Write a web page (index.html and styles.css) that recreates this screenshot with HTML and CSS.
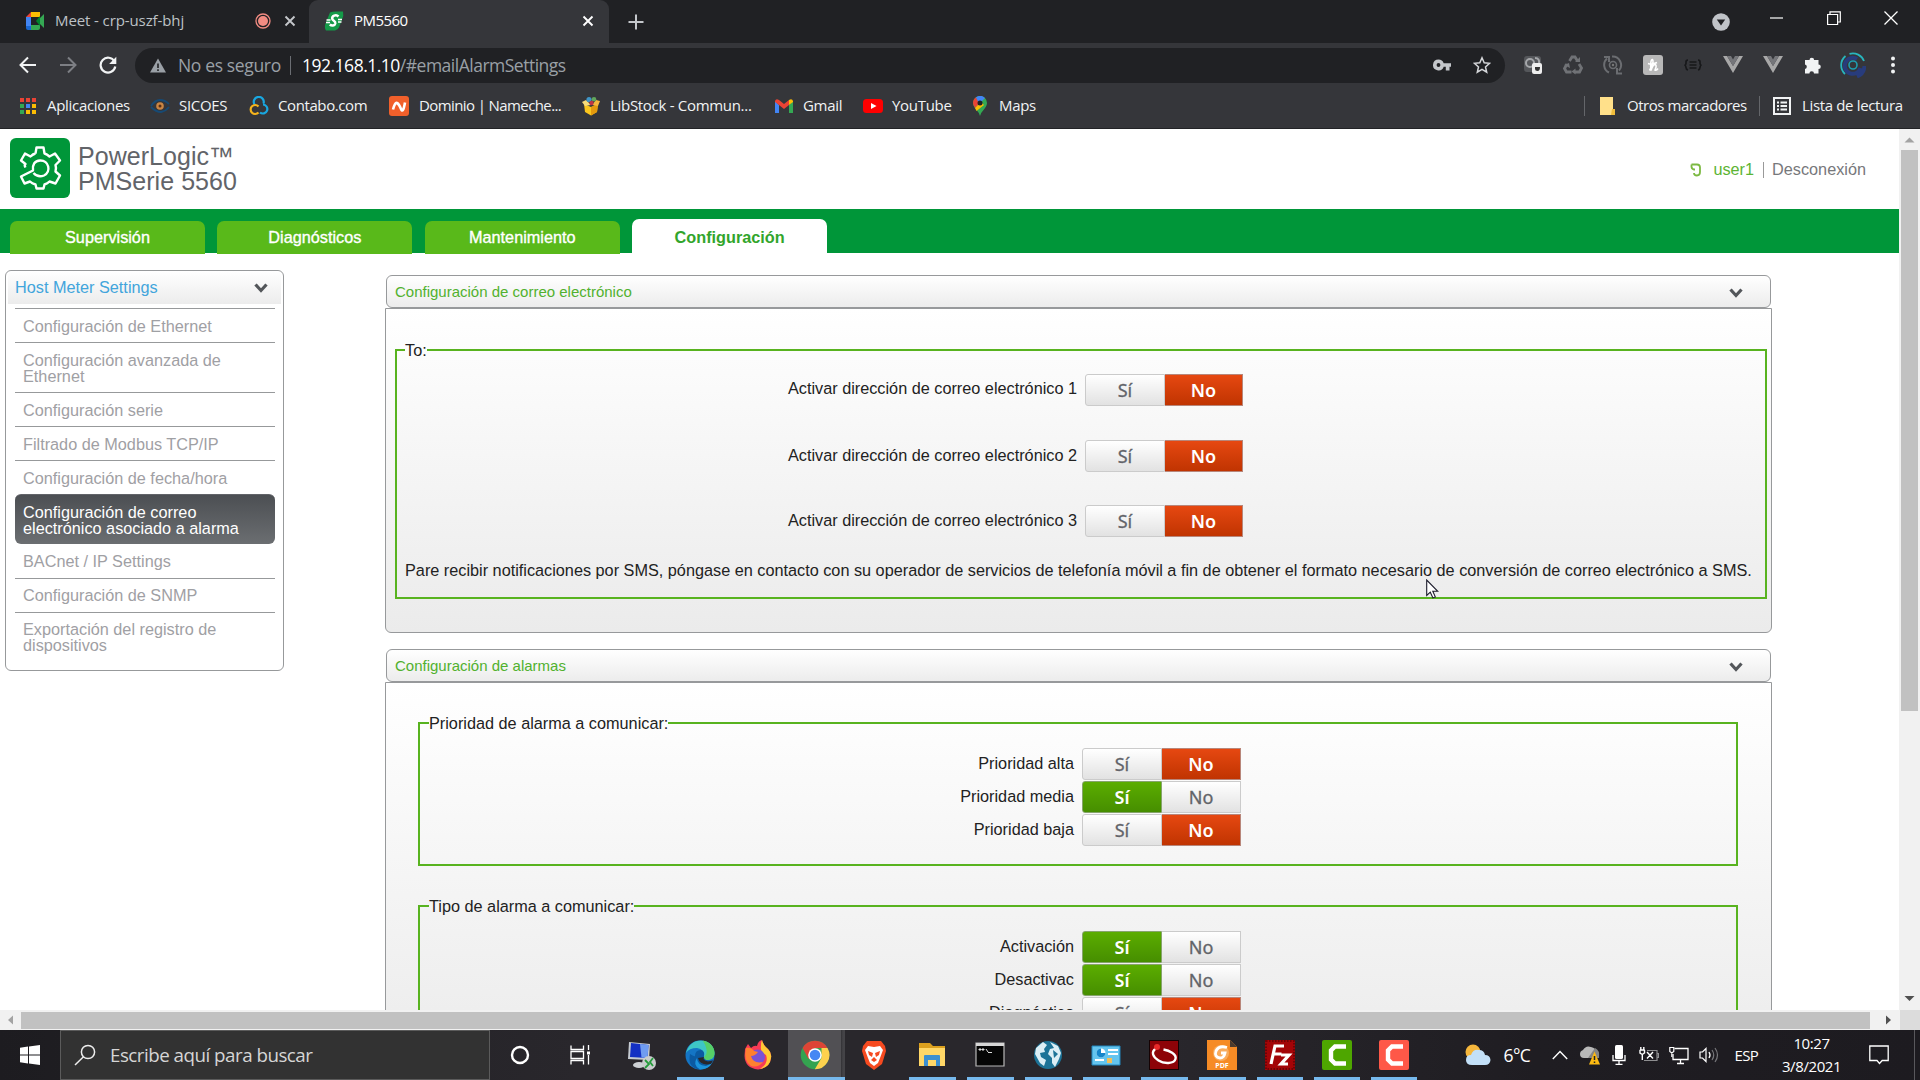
FILE: index.html
```html
<!DOCTYPE html>
<html lang="es">
<head>
<meta charset="utf-8">
<title>PM5560</title>
<link rel="stylesheet" href="styles.css">
</head>
<body>
<div class="screen">

<div class="tabstrip">
  <div class="tab">
    <svg class="i20" viewBox="0 0 20 20"><path d="M1 6l5-5v5z" fill="#ea4335"/><path d="M6 1h9v5H6z" fill="#fbbc04"/><path d="M1 6h5v9H1z" fill="#4285f4"/><path d="M1 15h5v4H3q-2 0-2-2z" fill="#1967d2"/><path d="M6 14h9v3q0 2-2 2H6z" fill="#34a853"/><path d="M11 10l4-5v10z" fill="#00832d"/><path d="M15 7l4-4v14l-4-4z" fill="#34a853"/></svg>
    <span class="tab-title">Meet - crp-uszf-bhj</span>
    <svg class="rec" viewBox="0 0 16 16"><circle cx="8" cy="8" r="7" fill="none" stroke="#f28b82" stroke-width="1.3"/><circle cx="8" cy="8" r="5" fill="#f28b82"/></svg>
    <svg class="tab-x" viewBox="0 0 12 12"><path d="M1.500 1.500l9 9M10.500 1.500l-9 9" stroke="#c4c7cb" stroke-width="1.900"/></svg>
  </div>
  <div class="tab tab-active">
    <svg class="i20" viewBox="0 0 20 20"><path d="M6 1.500Q8 .5 12 .5h7q1 4-1 8l-3 8q-1 2-4 3H2q-2-3-.5-7z" fill="#159a49"/><path d="M14.500 5.500C12 3 7.500 5 8.300 8c.5 2 3.500 2 3 4.500C10.700 15 7.500 15 5.800 13.500" fill="none" stroke="#fff" stroke-width="2.500"/><path d="M2.500 9h4M2 11.500h4M14 8.500h4M14 11h3.500" stroke="#fff" stroke-width="1.300"/></svg>
    <span class="tab-title tight">PM5560</span>
    <svg class="tab-x" viewBox="0 0 12 12"><path d="M1.500 1.500l9 9M10.500 1.500l-9 9" stroke="#fff" stroke-width="1.900"/></svg>
  </div>
  <svg class="newtab" viewBox="0 0 16 16"><path d="M8 .5v15M.5 8h15" stroke="#c4c7cb" stroke-width="2"/></svg>
  <div class="winctl">
    <svg class="wc-drop" viewBox="0 0 18 18"><circle cx="9" cy="9" r="8.800" fill="#c0c3c8"/><path d="M4.800 6.500h8.400L9 12.500z" fill="#202124"/></svg>
    <svg class="wc" viewBox="0 0 14 14"><path d="M0 7h13" stroke="#fff" stroke-width="1.200"/></svg>
    <svg class="wc" viewBox="0 0 14 14"><path d="M.6 3.500h10v10h-10zM3 3.500V.8h10.300V11h-2.700" fill="none" stroke="#fff" stroke-width="1.200"/></svg>
    <svg class="wc" viewBox="0 0 14 14"><path d="M.5 .5l13 13M13.500 .5l-13 13" stroke="#fff" stroke-width="1.300"/></svg>
  </div>
</div>

<div class="toolbar">
  <svg class="nav" viewBox="0 0 18 18"><path d="M17 9H2M9 1.500L1.500 9 9 16.500" fill="none" stroke="#f1f3f4" stroke-width="2"/></svg>
  <svg class="nav" viewBox="0 0 18 18"><path d="M1 9h15M9 1.500L16.500 9 9 16.500" fill="none" stroke="#7d7f84" stroke-width="2"/></svg>
  <svg class="nav" viewBox="0 0 18 18"><path d="M15.500 5.500A7.400 7.400 0 1 0 16.300 10.500" fill="none" stroke="#f1f3f4" stroke-width="2.200"/><path d="M17.300 .8v7.200h-7.200z" fill="#f1f3f4"/></svg>
  <div class="omnibox">
    <svg class="warn" viewBox="0 0 16 15"><path d="M8 .5l8 14H0z" fill="#9aa0a6"/><path d="M8 5.500v4.500M8 11.200v1.800" stroke="#202124" stroke-width="1.600"/></svg>
    <span class="insecure">No es seguro</span>
    <i class="omni-sep"></i>
    <span class="url"><b>192.168.1.10</b>/#emailAlarmSettings</span>
    <svg class="key" viewBox="0 0 18 12"><path fill-rule="evenodd" d="M5.500 .5a5.500 5.500 0 0 1 5.200 3.700H18v3.600h-1.500v3.700h-3.700V7.800h-2.100A5.500 5.500 0 1 1 5.500 .5zm0 3.600a1.900 1.900 0 1 0 0 3.800 1.900 1.900 0 0 0 0-3.800z" fill="#c4c7cb"/></svg>
    <svg class="star" viewBox="0 0 18 18"><path d="M9 1.800l2.200 5 5.400.5-4.100 3.600 1.200 5.300L9 13.400l-4.700 2.800 1.200-5.300-4.100-3.600 5.400-.5z" fill="none" stroke="#d5d7da" stroke-width="1.500"/></svg>
  </div>
  <div class="exts">
    <svg viewBox="0 0 20 20"><rect x="1" y="1" width="17" height="16" rx="3" fill="#55575b"/><circle cx="7" cy="8" r="4" fill="none" stroke="#a5a7aa" stroke-width="2"/><path d="M12 3q5 0 4 6" fill="none" stroke="#a5a7aa" stroke-width="2"/><rect x="9" y="8" width="10" height="11" rx="2" fill="#eee"/><path d="M12 12h5q0 4-2.500 4T12 14z" fill="#333"/></svg>
    <svg viewBox="0 0 20 20"><path d="M6.500 6L9 2h3l2.500 4M16 9l2.500 4-2 4H12M8.500 17h-5l-2-3.500L4 9" fill="none" stroke="#707276" stroke-width="2.800"/><path d="M12 7h5V2zM12.500 13.500v6l-4-3zM1 10l5-2 1 5z" fill="#707276"/></svg>
    <svg viewBox="0 0 20 20"><path d="M4 3.500a8.500 8.500 0 0 0 2 14M9 1.500a8.500 8.500 0 0 1 7 14M1 2h5v5M19 18.500h-5V13" fill="none" stroke="#6b6d71" stroke-width="2"/><circle cx="10" cy="10" r="3.500" fill="none" stroke="#6b6d71" stroke-width="1.600"/><circle cx="10" cy="10" r="1.200" fill="#777"/></svg>
    <svg viewBox="0 0 20 20"><rect width="20" height="20" rx="3" fill="#b8b8b8"/><path d="M6.500 15.500Q11.500 7 9.500 4.500 7 4.500 8 15.500 10 9.500 12.300 9.500q1.800 1-.3 5.500 1.500.8 3-1.500M5 8.500q4 1.500 9-1" fill="none" stroke="#fff" stroke-width="1.600"/></svg>
    <svg viewBox="0 0 20 20"><path d="M5 5Q2.800 5 3 7.500T1.500 10Q3 10.500 3 12.500T5 15M15 5q2.200 0 2 2.500t1.500 2.500q-1.500.5-1.500 2.500T15 15M6.500 7h7M6.500 10h7M6.500 13h7" fill="none" stroke="#17181a" stroke-width="1.700"/></svg>
    <svg viewBox="0 0 20 20"><path d="M0 1h4l6 10 6-10h4L10 18z" fill="#a8a8a8"/><path d="M4 1h4l2 3.500L12 1h4l-6 10z" fill="#75767a"/></svg>
    <svg viewBox="0 0 20 20"><path d="M0 1h4l6 10 6-10h4L10 18z" fill="#a8a8a8"/><path d="M4 1h4l2 3.500L12 1h4l-6 10z" fill="#75767a"/></svg>
    <svg viewBox="0 0 20 20"><path d="M2 5h4.500a2.300 2.300 0 1 1 4.600 0H15.500v4.500a2.300 2.300 0 1 1 0 4.600V18.500H11a2.300 2.300 0 0 0-4.600 0H2v-4.600a2.300 2.300 0 0 0 0-4.500z" fill="#f1f3f4"/></svg>
    <svg class="avatar" viewBox="0 0 26 26"><path d="M5 22A12 12 0 0 1 5.500 4M9.500 1.800A12 12 0 0 1 24 9" fill="none" stroke="#28b5bd" stroke-width="1.800"/><path d="M17 24.500A12 12 0 0 0 24.500 14M17 7a8 8 0 1 0 3.500 9" fill="none" stroke="#283c7c" stroke-width="4"/><circle cx="13" cy="13" r="4" fill="none" stroke="#1f9eb0" stroke-width="1.600"/></svg>
    <svg viewBox="0 0 20 20"><circle cx="10" cy="3.500" r="2" fill="#f1f3f4"/><circle cx="10" cy="10" r="2" fill="#f1f3f4"/><circle cx="10" cy="16.500" r="2" fill="#f1f3f4"/></svg>
  </div>
</div>

<div class="bookmarks">
  <div class="bm w-apps"><svg viewBox="0 0 20 20"><path d="M2 2h4v4H2zM8 2h4v4H8zM14 2h4v4h-4z" fill="#ea4335"/><path d="M2 8h4v4H2zM2 14h4v4H2z" fill="#34a853"/><path d="M8 8h4v4H8z" fill="#4285f4"/><path d="M14 8h4v4h-4zM8 14h4v4H8zM14 14h4v4h-4z" fill="#fbbc04"/></svg><span>Aplicaciones</span></div>
  <div class="bm w-sic"><svg viewBox="0 0 20 20"><path d="M1 10q4-6 9-6 5 0 9 4M1 11q5 5 10 5 5-1 8-5" fill="none" stroke="#164a75" stroke-width="1.800"/><circle cx="10" cy="10" r="3.800" fill="#c98543"/><circle cx="10" cy="10" r="1.500" fill="#573018"/></svg><span>SICOES</span></div>
  <div class="bm w-con"><svg viewBox="0 0 20 20"><path d="M5.500 8.500a5 5 0 1 1 9-1M14 8.500a4.500 4.500 0 1 1-3 8" fill="none" stroke="#19a7e0" stroke-width="2.200"/><path d="M9.500 10.500a4.500 4.500 0 1 0 0 6" fill="none" stroke="#f5b31c" stroke-width="2.200"/></svg><span>Contabo.com</span></div>
  <div class="bm w-dom"><svg viewBox="0 0 20 20"><rect width="20" height="20" rx="3" fill="#f1602b"/><path d="M4 13.500Q6 6 8 7t4 6 4-6.500" fill="none" stroke="#fff" stroke-width="2.600"/></svg><span>Dominio | Nameche...</span></div>
  <div class="bm w-lib"><svg viewBox="0 0 20 20"><path d="M3 8l7 3 7-3-1 8-6 3.500L4 16z" fill="#fbc61e"/><path d="M10 11v8.500l6-3.500 1-8z" fill="#e49a0d"/><path d="M1 6l4-2 5 5-6 1z" fill="#f7dc7a"/><path d="M19 5l-4-1-4 5 6 1z" fill="#f4b63e"/><circle cx="8" cy="3.500" r="2.600" fill="#3f95c6"/><circle cx="13" cy="3.200" r="2.300" fill="#61a75c"/><circle cx="10.500" cy="7" r="2.200" fill="#bf3545"/></svg><span>LibStock - Commun...</span></div>
  <div class="bm w-gm"><svg viewBox="0 0 20 20"><path d="M1 5v12h4V9z" fill="#4285f4"/><path d="M19 5v12h-4V9z" fill="#34a853"/><path d="M1 5q1-3 4-1l5 4 5-4v5l-5 4-5-4-4-3z" fill="#ea4335"/><path d="M15 4q3-2 4 1v1l-4 3z" fill="#fbbc04"/></svg><span>Gmail</span></div>
  <div class="bm w-yt"><svg viewBox="0 0 20 20"><rect y="3" width="20" height="14" rx="3.500" fill="#f00"/><path d="M8 7l5.500 3L8 13z" fill="#fff"/></svg><span>YouTube</span></div>
  <div class="bm"><svg viewBox="0 0 20 20"><path d="M3 7a7 7 0 0 1 14 0q0 3-3.500 7-2.500 2.500-3.500 6-1-3.500-3.500-6Q3 10 3 7z" fill="#34a853"/><path d="M3 7a7 7 0 0 1 3-5.700L10 7l-5 5Q3 9 3 7z" fill="#ea4335"/><path d="M5 12l6-6 3 3-7.500 6z" fill="#fbbc04"/><path d="M6 1.300Q11-2 15 2l-6 6z" fill="#4285f4"/><circle cx="10" cy="7" r="2.500" fill="#202124"/></svg><span>Maps</span></div>
  <div class="bm-right">
    <i class="bm-sep"></i>
    <div class="bm w-ot"><svg viewBox="0 0 20 20"><path d="M3 1h13v18H3z" fill="#ffe08a"/><path d="M15 13h3v6h-4z" fill="#f0bd3c"/></svg><span>Otros marcadores</span></div>
    <i class="bm-sep"></i>
    <div class="bm w-li"><svg viewBox="0 0 20 20"><rect x="2" y="2" width="16" height="16" fill="none" stroke="#f1f3f4" stroke-width="2"/><path d="M5 6.500h2M8.500 6.500H15M5 10h2M8.500 10H15M5 13.500h2M8.500 13.500H15" stroke="#f1f3f4" stroke-width="1.800"/></svg><span>Lista de lectura</span></div>
  </div>
</div>

<div class="viewport">
  <div class="page">
    <header class="head">
      <svg class="logo" viewBox="0 0 60 60"><rect width="60" height="60" rx="6" fill="#009639"/><path d="M25.500 15.500L26.500 9.500h7L34.500 15.500Q37 16.200 39.500 18.500L45 15.500 50 22.500 45.500 27q1 3 0 6.500L50 37.500 45.500 45.500 39.500 43.500Q37.500 45.500 34.500 46.500L33.500 50.500h-7L25.500 46.500Q22 45.500 20 43.500L14.500 45.500 11 38.500 23 32.500Q22 23 30 22.500C39 22 41.500 34 34 37.500Q28 40 23.500 35M15.500 29.500Q14 27 15.500 26L11 22.500 15 15.500 20.500 18.500Q23 16 25.500 15.500" fill="none" stroke="#fff" stroke-width="2.400" stroke-linejoin="round"/></svg>
      <div class="product">PowerLogic™<br>PMSerie 5560</div>
      <div class="session">
        <svg class="person" viewBox="0 0 12 14"><path d="M1.500 1.500H7q3 0 3 3V9q0 3.500-3 3.500T4 10M1.500 1.500Q1 6 4 6.500h1" fill="none" stroke="#7cb942" stroke-width="1.800"/></svg>
        <span class="user">user1</span><i class="user-sep"></i><span class="logout">Desconexión</span>
      </div>
    </header>
    <nav class="tabs">
      <a>Supervisión</a><a>Diagnósticos</a><a>Mantenimiento</a><a class="on">Configuración</a>
    </nav>
    <div class="columns">
      <aside class="side">
        <div class="side-head"><span>Host Meter Settings</span><svg class="chev" viewBox="0 0 14 10"><path d="M1.500 1.500L7 7.500l5.500-6" fill="none" stroke="#53565a" stroke-width="3.200"/></svg></div>
        <ul>
          <li>Configuración de Ethernet</li>
          <li class="two">Configuración avanzada de Ethernet</li>
          <li>Configuración serie</li>
          <li>Filtrado de Modbus TCP/IP</li>
          <li>Configuración de fecha/hora</li>
          <li class="two sel">Configuración de correo electrónico asociado a alarma</li>
          <li class="first">BACnet / IP Settings</li>
          <li class="low">Configuración de SNMP</li>
          <li class="two low">Exportación del registro de dispositivos</li>
        </ul>
      </aside>
      <main class="main">
        <div class="ph"><span>Configuración de correo electrónico</span><svg class="chev" viewBox="0 0 14 10"><path d="M1.500 1.500L7 7.500l5.500-6" fill="none" stroke="#53565a" stroke-width="3.200"/></svg></div>
        <section class="pb pb-mail">
          <fieldset class="fs fs-mail">
            <legend>To:</legend>
            <div class="row"><label>Activar dirección de correo electrónico 1</label><div class="tg"><span>Sí</span><span class="red">No</span></div></div>
            <div class="row"><label>Activar dirección de correo electrónico 2</label><div class="tg"><span>Sí</span><span class="red">No</span></div></div>
            <div class="row"><label>Activar dirección de correo electrónico 3</label><div class="tg"><span>Sí</span><span class="red">No</span></div></div>
            <p>Pare recibir notificaciones por SMS, póngase en contacto con su operador de servicios de telefonía móvil a fin de obtener el formato necesario de conversión de correo electrónico a SMS.</p>
          </fieldset>
        </section>
        <div class="ph ph2"><span>Configuración de alarmas</span><svg class="chev" viewBox="0 0 14 10"><path d="M1.500 1.500L7 7.500l5.500-6" fill="none" stroke="#53565a" stroke-width="3.200"/></svg></div>
        <section class="pb pb-alarm">
          <fieldset class="fs fs-alarm">
            <legend>Prioridad de alarma a comunicar:</legend>
            <div class="row"><label>Prioridad alta</label><div class="tg"><span>Sí</span><span class="red">No</span></div></div>
            <div class="row"><label>Prioridad media</label><div class="tg"><span class="green">Sí</span><span>No</span></div></div>
            <div class="row"><label>Prioridad baja</label><div class="tg"><span>Sí</span><span class="red">No</span></div></div>
          </fieldset>
          <fieldset class="fs fs-alarm">
            <legend>Tipo de alarma a comunicar:</legend>
            <div class="row"><label>Activación</label><div class="tg"><span class="green">Sí</span><span>No</span></div></div>
            <div class="row"><label>Desactivac</label><div class="tg"><span class="green">Sí</span><span>No</span></div></div>
            <div class="row"><label>Diagnóstico</label><div class="tg"><span>Sí</span><span class="red">No</span></div></div>
          </fieldset>
        </section>
      </main>
    </div>
  </div>
  <div class="vbar"><svg viewBox="0 0 21 21"><path d="M5.500 13.500l5-5 5 5z" fill="#a3a3a3"/></svg><i class="vthumb"></i><svg viewBox="0 0 21 21"><path d="M5.500 7l5 5 5-5z" fill="#505050"/></svg></div>
</div>
<div class="hbar"><svg viewBox="0 0 21 20"><path d="M13 5.500v9l-5-4.500z" fill="#a3a3a3"/></svg><i class="hthumb"></i><svg viewBox="0 0 30 20"><path d="M16 5.500v9l5-4.500z" fill="#505050"/></svg><i class="corner"></i></div>

<div class="taskbar">
  <div class="start"><svg viewBox="0 0 20 20"><path d="M0 2.800l8-1.200v8H0zM9 1.500L20 0v9.600H9zM0 10.500h8v8l-8-1.200zM9 10.500h11V20L9 18.500z" fill="#fff"/></svg></div>
  <div class="search"><svg viewBox="0 0 22 22"><circle cx="14" cy="8" r="6.600" fill="none" stroke="#eee" stroke-width="1.500"/><path d="M9.500 12.800L1 21" stroke="#eee" stroke-width="1.500"/></svg><span>Escribe aquí para buscar</span></div>
  <div class="slot sys"><svg viewBox="0 0 20 20"><circle cx="10" cy="10" r="8" fill="none" stroke="#fff" stroke-width="2.400"/></svg></div>
  <div class="slot sys"><svg viewBox="0 0 20 20"><path d="M1 .5v4h12.500v-4M1 19.500v-4h12.500v4M1 6.500h12.500v7H1z" fill="none" stroke="#fff" stroke-width="1.300"/><path d="M18.500 0v5M18.500 10v9.500" stroke="#fff" stroke-width="1.300"/><path d="M17 6.500h3v3h-3z" fill="#fff"/></svg></div>
  <div class="apps">
    <div class="slot"><svg viewBox="0 0 30 30"><path d="M2 2l21 2-1 16L1 19z" fill="#c5cbd2"/><path d="M4 3l17.500 2-1 13L3 17z" fill="#1330c4"/><path d="M13 4l8.500 1-1 13-6-.5z" fill="#6f9cf1"/><ellipse cx="12" cy="25" rx="6" ry="3" fill="#cdd0d4"/><circle cx="22" cy="23" r="7" fill="#c9cccd"/><path d="M18 20l4 4-4 4M26 18l-3 4 3 4" fill="none" stroke="#249b3b" stroke-width="1.800"/></svg></div>
    <div class="slot run"><svg viewBox="0 0 30 30"><circle cx="15" cy="15" r="14.500" fill="#1475c5"/><path d="M1 13C3 5 9 .5 16 .5c8 0 13.500 6 13.500 12.500 0 5-3.500 7-7.500 7-3 0-4.500-1-3-3Q20 9 12 8 4 8 1 13z" fill="#3ec6c5"/><path d="M18 .8c7 1 11.500 6.500 11.500 12.200 0 5-3.500 7-7.500 7-3 0-4.500-1-3-3 5-4 2-11-1-16z" fill="#56cf67"/><path d="M10 16q0-6 6-6 4 1 3 6-1 2 2 4 4 1 7 0-4 9-13 9.500Q2 28 5 14q5 3 5 2z" fill="#0b5aa2"/><path d="M12 18q0 7 9 8l6-3q-3 6-12 6.500Q7 25 12 18z" fill="#1b93dc"/><path d="M19 17q-2 3 4 4.500l5-1-2 3.500q-11 2-13-6z" fill="#29272c"/></svg></div>
    <div class="slot"><svg viewBox="0 0 30 30"><path d="M2 9l3-5 3 4q3-3 6-2 1-5 5-6 1 5 6 9 4 4 3 9-1 10-13 11.500Q2 28 1.500 16z" fill="#f93b55"/><path d="M19 0q1 5 6 9 4 4 3 9-1 9-11 11 9-6 6-14-6-3-5-9 0-4 1-6z" fill="#ffc935"/><circle cx="14.500" cy="17" r="7.500" fill="#7852d8"/><path d="M3 8q5-1 8 3l4 1q-3 4-7 4 2 8 12 6-5 6-12 4-8-5-5-18z" fill="#ff8030"/></svg></div>
    <div class="slot run active"><svg viewBox="0 0 30 30"><circle cx="15" cy="15" r="14.300" fill="#34a350"/><path d="M15 .7a14.300 14.300 0 0 1 12.500 7.200H15L8.500 19 2.600 7.900A14.300 14.300 0 0 1 15 .7z" fill="#dd4436"/><path d="M27.500 7.900A14.300 14.300 0 0 1 14.800 29.300L21.500 18V7.900z" fill="#fdd14e"/><circle cx="15" cy="15" r="6.800" fill="#fff"/><circle cx="15" cy="15" r="5.300" fill="#4587f3"/></svg></div>
    <div class="slot"><svg viewBox="0 0 30 30"><path d="M8 1h14l4 5 1 5-4 13-8 6-8-6L3 11l1-5z" fill="#f64a20"/><path d="M9 6l6 1 6-1 3 4-3 8-2 5-4 3-4-3-2-5-3-8z" fill="#fff"/><path d="M9 11l5 2-1 4-3-2zM21 11l-5 2 1 4 3-2zM12 20l3 2 3-2-3-3z" fill="#f64a20"/></svg></div>
    <div class="slot run"><svg viewBox="0 0 30 30"><path d="M2 3h11l3 3h12v20H2z" fill="#dba01e"/><path d="M2 8h26v18H2z" fill="#ffd767"/><path d="M7 26V16q0-1 1-1h14q1 0 1 1v10h-4v-6h-8v6z" fill="#3c8fcf"/></svg></div>
    <div class="slot run"><svg viewBox="0 0 30 30"><path d="M1 3h28v23H1z" fill="#060606" stroke="#b8b8b8" stroke-width="1.200"/><path d="M1 3h28v3H1z" fill="#d6d6d6"/><path d="M4 9h2v1H4zM7 9h2v1H7zM11 9l2 3M13 12.500h4" stroke="#ddd" stroke-width="1" fill="#ddd"/></svg></div>
    <div class="slot run"><svg viewBox="0 0 30 30"><circle cx="15" cy="15" r="14" fill="#1c7397"/><path d="M3 8l7-6 4 3-3 4 1 3-5 1 1 4 5 3-2 6-4-3-5-9zM17 2l8 4 3 7-2 6-4 8-3-4v-5l-4-4 2-5 4-1-2-3z" fill="#dbeef5"/><path d="M20 10l5 4-4 4z" fill="#1c7397"/></svg></div>
    <div class="slot run"><svg viewBox="0 0 30 30"><path d="M1 6h28v19H1z" fill="#64c5ef" stroke="#2387bd"/><circle cx="10" cy="13" r="4.500" fill="#fff"/><path d="M10 8.500v4.500h4.500a4.500 4.500 0 1 1-4.500-4.500z" fill="#1686ca"/><path d="M17 10h10M17 14h10M4 20h9" stroke="#fff" stroke-width="2"/><path d="M16 18h5v5h-5z" fill="#f2c05b"/></svg></div>
    <div class="slot run"><svg viewBox="0 0 30 30"><rect x=".5" y=".5" width="29" height="29" fill="#8d0308" stroke="#150203"/><path d="M7 8.500C1.500 12 4 17 9.500 20.500S25 24 26.500 19 20 10.500 14.500 9.500" fill="none" stroke="#fff" stroke-width="2.400"/><circle cx="8" cy="7" r="3" fill="#e72a2a"/></svg></div>
    <div class="slot run"><svg viewBox="0 0 30 30"><path d="M0 0h23l7 7v23H0z" fill="#f68b25"/><path d="M23 0l7 7h-7z" fill="#4a3a2e"/><circle cx="14" cy="13" r="8" fill="#f9ac5d"/><path d="M20 7.500Q12 5 9 11q-2 6 4 7 4 0 5-5h-4" fill="none" stroke="#fff" stroke-width="2.800"/><text x="15" y="27.500" text-anchor="middle" class="pdf">PDF</text></svg></div>
    <div class="slot run narrow"><svg viewBox="0 0 30 30"><rect width="30" height="30" fill="#a30407"/><rect x="1" y="1" width="28" height="28" fill="none" stroke="#6d0305" stroke-width="2" stroke-dasharray="1.500 1.500"/><path d="M6 24L10 6h9M8.500 14h8M16 15h8l-8 9h7" fill="none" stroke="#fff" stroke-width="3.200"/></svg></div>
    <div class="slot run narrow"><svg viewBox="0 0 30 30"><rect width="30" height="30" rx="2" fill="#4ea600"/><path d="M24 6.500H13L9 10.500v9l4 4h11" fill="none" stroke="#fff" stroke-width="4.400"/></svg></div>
    <div class="slot run narrow"><svg viewBox="0 0 30 30"><rect width="30" height="30" rx="2" fill="#fe5848"/><path d="M24 6.500H13L9 10.500v9l4 4h11" fill="none" stroke="#fff" stroke-width="4.400"/></svg></div>
  </div>
  <div class="tray">
    <svg class="weather" viewBox="0 0 26 22"><circle cx="8" cy="8" r="7.500" fill="#f6b73c"/><path d="M7 21q-6 0-6-5 0-5 5-5 2-6 8-5 5 0 6 5 5 0 5.500 5-.5 5-5.500 5z" fill="#c3e0f8"/></svg>
    <span class="temp">6°C</span>
    <svg class="t-up" viewBox="0 0 16 10"><path d="M.8 9L8 1.500 15.200 9" fill="none" stroke="#fff" stroke-width="1.400"/></svg>
    <svg class="t20" viewBox="0 0 20 20"><path d="M4 13q-4 0-4-4 0-3 3-4 3-5 8-3 5 1 5 5 3 0 3 3-1 3-3 3z" fill="#b9b9b9"/><path d="M8 13L15 3q5 2 4 10z" fill="#858585"/><path d="M14.500 6.500L20 19.500H9z" fill="#fdba12"/><path d="M14.500 11v4M14.500 16.500v1.500" stroke="#222" stroke-width="1.500"/></svg>
    <svg class="t-mic" viewBox="0 0 14 20"><rect x="3" width="8" height="14" rx="1.500" fill="#fff"/><path d="M1 10v5.500h12V10M7 15.500V19M3.500 19.300h7" fill="none" stroke="#fff" stroke-width="1.300"/></svg>
    <svg class="t20" viewBox="0 0 20 20"><path d="M8 5.500h10v10H5M18 8.500h1.500v4H18" fill="none" stroke="#8e8e90" stroke-width="1.200"/><path d="M.8 5h5M1.800 2v3M4.800 2v3M1 5v3l2.300 1.500L5.500 8V5M3.300 9.500V15M8 7l6 6.500M14 7l-6 6.500" fill="none" stroke="#fff" stroke-width="1.400"/></svg>
    <svg class="t20" viewBox="0 0 20 20"><path d="M5.500 3.500H19v11H4V9M11.500 14.500v4M8 18.500h7" fill="none" stroke="#fff" stroke-width="1.300"/><path d="M.8 2.500h4v4l-2 1.500-2-1.500zM2.800 8v4" fill="none" stroke="#fff" stroke-width="1.200"/></svg>
    <svg class="t20" viewBox="0 0 20 20"><path d="M1 7h2.500L7 3.500v13L3.500 13H1z" fill="none" stroke="#fff" stroke-width="1.200"/><path d="M10 7q2 3 0 6" fill="none" stroke="#fff" stroke-width="1.300"/><path d="M13 5q3.500 5 0 10M16 3q5 7 0 14" fill="none" stroke="#77777b" stroke-width="1.200"/></svg>
    <span class="lang">ESP</span>
    <div class="clock"><span>10:27</span><span>3/8/2021</span></div>
    <svg class="t-note" viewBox="0 0 20 20"><path d="M.8 1h18.400v14.500h-6L10.500 18.500 8 15.500H.8z" fill="none" stroke="#fff" stroke-width="1.300"/></svg>
    <i class="peek"></i>
  </div>
</div>

<svg class="cursor" viewBox="0 0 13 20"><path d="M.7 1v15.500l3.600-3.300 2.600 5.700 2.400-1-2.500-5.600h5z" fill="#fff" stroke="#1b1b2b" stroke-width="1.100"/></svg>
</div>
</body>
</html>
```
FILE: styles.css
```css
* { box-sizing: border-box; }
html, body { margin: 0; height: 100%; overflow: hidden; }
body { font-family: "Liberation Sans", Arial, sans-serif; background: #fff; }
svg { display: block; flex: none; }
.screen { width: 1920px; height: 1080px; display: flex; flex-direction: column; position: relative; overflow: hidden; }
.screen > div { flex: none; }

/* browser frame */
.tabstrip, .toolbar, .bookmarks, .taskbar { font-family: "Open Sans", "Noto Sans", sans-serif; }
.tabstrip { height: 43px; background: #202124; display: flex; align-items: center; color: #bdc1c6; }
.tab { display: flex; align-items: center; height: 43px; width: 309px; padding: 0 13px 2px 25px; font-size: 15px; }
.tab-active { width: 300px; padding-left: 15px; padding-right: 15px; background: #35363a; color: #fff; border-radius: 9px 9px 0 0; }
.i20 { width: 20px; height: 20px; }
.tab-title { margin-left: 10px; flex: 1; letter-spacing: -.1px; white-space: nowrap; padding-bottom: 2px; }
.tab-title.tight { letter-spacing: -.55px; }
.rec { width: 16px; height: 16px; margin-right: 13px; }
.tab-x { width: 12px; height: 12px; }
.newtab { width: 16px; height: 16px; margin-left: 19px; }
.winctl { margin-left: auto; display: flex; align-items: center; margin-right: 22px; padding-bottom: 7px; }
.wc-drop { width: 18px; height: 18px; margin-right: 40px; margin-top: 7px; }
.wc { width: 14px; height: 14px; margin-left: 43px; }
.wc-drop + .wc { margin-left: 0; }

.toolbar { height: 45px; background: #35363a; display: flex; align-items: center; }
.nav { width: 18px; height: 18px; margin: 0 22px 2px 0; }
.toolbar .nav:first-child { margin-left: 19px; }
.nav:nth-child(3) { margin-right: 18px; }
.omnibox { width: 1370px; height: 35px; border-radius: 18px; background: #202124; display: flex; align-items: center; padding: 0 14px 1px 15px; color: #9aa0a6; font-size: 17.500px; white-space: nowrap; }
.warn { width: 16px; height: 15px; }
.insecure { width: 102px; margin-left: 12px; letter-spacing: -.35px; }
.omni-sep { width: 1px; height: 19px; background: #6b6e73; margin: 0 11px 0 10px; }
.url { letter-spacing: -.5px; flex: 1; }
.url b { color: #fff; font-weight: 400; }
.key { width: 18px; height: 12px; margin-right: 22px; }
.star { width: 18px; height: 18px; }
.exts { display: flex; margin-left: 18px; gap: 20px; align-items: center; padding-bottom: 1px; }
.exts svg { width: 20px; height: 20px; }
.exts .avatar { width: 26px; height: 26px; margin: 0 -3px; }

.bookmarks { height: 41px; background: #35363a; border-bottom: 1px solid #222326; display: flex; align-items: center; padding: 0 18px 5px; color: #f1f3f4; font-size: 15px; white-space: nowrap; }
.bm { display: flex; align-items: center; gap: 9px; letter-spacing: -.3px; }
.bm svg { width: 20px; height: 20px; }
.bm span { padding-bottom: 2px; }
.w-apps { width: 132px; }
.w-sic { width: 99px; }
.w-con { width: 140px; letter-spacing: -.4px; }
.w-dom { width: 192px; gap: 10px; letter-spacing: -.6px; }
.w-lib { width: 193px; }
.w-gm { width: 89px; }
.w-yt { width: 107px; }
.bm-right { margin-left: auto; display: flex; align-items: center; }
.bm-sep { width: 1px; height: 20px; background: #64666a; }
.w-ot { width: 162px; margin-left: 12px; gap: 10px; letter-spacing: -.45px; }
.w-li { width: 130px; margin-left: 12px; gap: 10px; letter-spacing: -.35px; }

/* device page */
.viewport { height: 881px; display: flex; overflow: hidden; }
.page { width: 1899px; height: 881px; overflow: hidden; background: #fff; font-size: 16.250px; color: #222; }
.head { height: 80px; display: flex; align-items: center; padding: 0 33px 2px 10px; }
.logo { width: 60px; height: 60px; }
.product { font-size: 25px; line-height: 25px; color: #626469; margin: 2px 0 0 8px; letter-spacing: .04px; }
.session { margin-left: auto; display: flex; align-items: center; padding-top: 3px; }
.person { width: 12px; height: 14px; }
.user { color: #5cb433; margin-left: 11px; }
.user-sep { width: 1px; height: 16px; background: #999; margin: 0 8px 0 9px; }
.logout { color: #77787b; }

.tabs { height: 44px; background: #009639; display: flex; padding: 12px 0 0 10px; gap: 12.400px; }
.tabs a { width: 195px; height: 33px; border-radius: 7px 7px 0 0; background: #59b91a; color: #fff; text-align: center; line-height: 33px; -webkit-text-stroke: .35px #fff; }
.tabs .on { background: #fff; color: #32a52b; font-weight: 700; margin-top: -2px; height: 36px; line-height: 37px; -webkit-text-stroke: 0; }

.columns { display: flex; align-items: flex-start; padding-left: 5px; }
.side { width: 279px; height: 401px; margin-top: 17px; border: 1px solid #97999b; border-radius: 6px; padding: 0 9px; }
.side-head { height: 33px; margin: 0 -7px 4px; padding: 0 13px 0 7px; display: flex; align-items: center; justify-content: space-between; color: #42a5dc; background: linear-gradient(#fff, #ececec); border-radius: 5px 5px 0 0; }
.chev { width: 14px; height: 10px; }
.side ul { list-style: none; margin: 0; padding: 0; }
.side li { height: 34px; padding: 9px 8px 0; line-height: 16px; border-top: 1px solid #97999b; color: #9fa0a4; width: 260px; }
.side li.two { height: 50px; }
.side li.sel { color: #fff; background: linear-gradient(#4c4f53, #6b6e71); border-radius: 6px; border-top-color: #626469; }
.side li.first { border-top-color: transparent; padding-top: 8px; }
.side li.low { padding-top: 8px; }

.main { width: 1387px; margin: 22px 0 0 101px; }
.ph { height: 33px; width: 1385px; margin-left: 1px; border: 1px solid #97999b; border-radius: 6px; background: linear-gradient(#fff, #ececec); display: flex; align-items: center; justify-content: space-between; padding: 2px 27px 0 8px; font-size: 15px; color: #51b12e; }
.ph span { padding-bottom: 2px; }
.ph2 { margin-top: 16px; }
.pb { border: 1px solid #97999b; border-radius: 0 0 6px 6px; background: linear-gradient(#fff, #ebebeb); }
.pb-mail { height: 325px; padding: 32px 4px 0 9px; }
.pb-alarm { height: 430px; padding: 31px 33px 0 32px; background: linear-gradient(#fff, #ebebeb 90%); }
.fs { border: 2px solid #58b31f; margin: 0; padding: 0; min-width: 0; }
.fs legend { padding: 0; margin-left: 8px; line-height: 19px; height: 18px; }
.fs-mail { height: 258px; }
.row { display: flex; align-items: flex-start; }
.row label { width: 680px; text-align: right; line-height: 19px; white-space: nowrap; }
.fs-mail .row { height: 66px; }
.fs-mail .row:nth-of-type(1) { margin-top: 15px; }
.fs-mail .row:nth-of-type(2) { height: 65px; }
.fs-mail .row:nth-of-type(3) { height: 56px; }
.fs-mail label { padding-top: 6px; }
.fs-mail .row:nth-of-type(1) label { padding-top: 5px; }
.fs-mail p { margin: 0; padding: 0 0 0 8px; line-height: 19px; white-space: nowrap; }
.fs-alarm { height: 152px; margin-bottom: 31px; }
.fs-alarm legend { margin-left: 9px; }
.fs-alarm .row { height: 33px; }
.fs-alarm .row:nth-of-type(1) { margin-top: 16px; }
.fs-alarm label { width: 654px; padding-top: 6px; }
.tg { display: flex; margin-left: 8px; font-family: "Noto Sans", "Open Sans", sans-serif; font-size: 18px; }
.tg span { width: 80px; height: 32px; border: 1px solid #cbcbcb; background: linear-gradient(#fff, #e2e2e2); color: #626469; text-align: center; line-height: 31px; border-radius: 3px 0 0 3px; -webkit-text-stroke: .3px #626469; }
.tg span + span { width: 78px; border-radius: 0; border-left-width: 0; }
.tg .red { background: linear-gradient(#e64811, #c03401); border-color: #b8867a; color: #fff; font-weight: 600; -webkit-text-stroke: 0; }
.tg .green { background: linear-gradient(#5bad00, #468e00); border-color: #86a46c; color: #fff; font-weight: 600; -webkit-text-stroke: 0; }
.fs-alarm .tg span + span { width: 79px; }

.vbar { width: 21px; height: 881px; background: #f1f1f1; display: flex; flex-direction: column; }
.vbar svg { width: 21px; height: 21px; }
.vthumb { width: 17px; height: 561px; margin: 0 0 278px 2px; background: #c1c1c1; }
.hbar { height: 20px; background: #f1f1f1; display: flex; align-items: center; }
.hbar svg { height: 20px; }
.hbar svg:first-child { width: 21px; }
.hbar svg:nth-child(3) { width: 30px; }
.hthumb { width: 1849px; height: 17px; background: #c1c1c1; }
.corner { flex: 1; height: 20px; background: #dcdcdc; }

/* desktop taskbar */
.taskbar { height: 50px; display: flex; background: linear-gradient(90deg, #1d1c20, #29272c 30%, #29272c 60%, #1f1d22 80%, #1d1b20); color: #fff; }
.start { width: 60px; padding: 15px 0 0 20px; }
.start svg { width: 20px; height: 20px; }
.search { width: 430px; background: #323232; border: 1px solid #5b5b5b; display: flex; align-items: center; padding: 0 13px; font-size: 18.750px; color: #d6d6d6; letter-spacing: -.5px; white-space: nowrap; }
.search svg { width: 22px; height: 22px; margin-right: 14px; }
.search span { padding-bottom: 2px; }
.slot { flex: none; width: 58px; height: 50px; display: flex; align-items: center; justify-content: center; position: relative; }
.slot.narrow { width: 57.200px; }
.slot.sys { width: 60px; }
.slot.sys svg { width: 20px; height: 20px; }
.sys + .sys { width: 63px; padding-right: 4px; }
.slot svg { width: 30px; height: 30px; }
.apps { display: flex; flex: none; }
.slot.run::after { content: ""; position: absolute; left: 5.500px; right: 5.500px; bottom: 0; height: 3px; background: #76b9ed; }
.slot.active { background: linear-gradient(90deg, transparent 1px, #515054 1px, #515054 54px, #323135 54px, #444347 56px); }
.slot.active::after { left: 1px; right: 0; }
.slot.active svg { margin-right: 2px; }
.pdf { font: 700 7px "Open Sans", sans-serif; fill: #fff; }
.tray { flex: 1; display: flex; align-items: center; font-size: 16px; white-space: nowrap; }
.weather { width: 26px; height: 22px; margin-left: 42px; margin-right: 13px; }
.temp { width: 34px; font-size: 17.500px; letter-spacing: -.6px; }
.t-up { width: 16px; height: 10px; margin: 0 12px 0 14px; }
.t20 { width: 20px; height: 20px; margin-right: 10px; }
.t-mic { width: 14px; height: 20px; margin: 0 13px 0 2px; }
.lang { width: 28px; margin-left: 6px; font-size: 15px; letter-spacing: -.7px; }
.clock { width: 92px; font-size: 15px; letter-spacing: -.4px; display: flex; flex-direction: column; align-items: center; line-height: 23px; margin: 0 11px 0 3px; }
.t-note { width: 20px; height: 20px; }
.peek { width: 1px; height: 50px; background: #59585c; margin-left: auto; margin-right: 5px; }
.cursor { position: absolute; left: 1426px; top: 579px; width: 13px; height: 20px; }
```
